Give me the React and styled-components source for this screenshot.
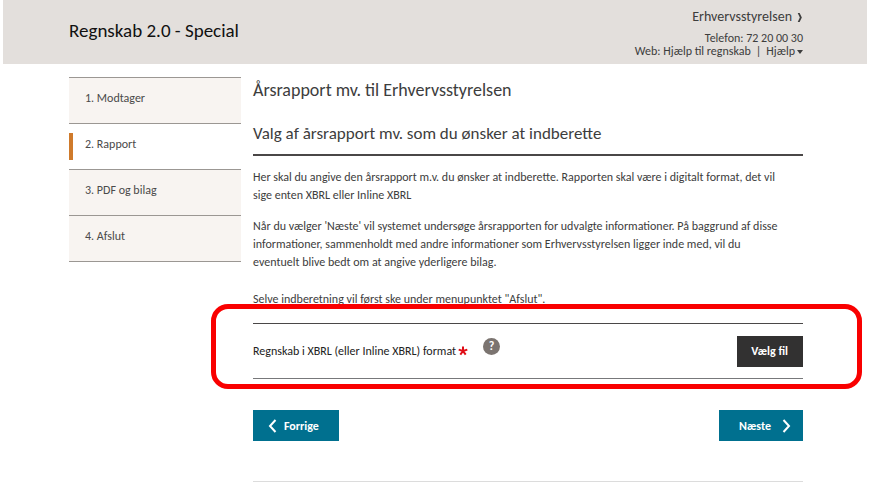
import React, { useState } from 'react';
import styled, { createGlobalStyle } from 'styled-components';

const steps = ['1. Modtager', '2. Rapport', '3. PDF og bilag', '4. Afslut'];

const App = () => {
  const [active, setActive] = useState(1);

  return (
    <>
      <GlobalStyle />
      <Header>
        <AppName>Regnskab 2.0 - Special</AppName>
        <Contact>
          <Agency href="#styrelsen">
            Erhvervsstyrelsen
            <AgencyArrow viewBox="0 0 6 12" aria-hidden="true">
              <path d="M0.5 1H2.6L5 6L2.6 11H0.5L2.8 6Z" />
            </AgencyArrow>
          </Agency>
          <div>Telefon: 72 20 00 30</div>
          <ContactLinks>
            <span>Web: <a href="#regnskab">Hjælp til regnskab</a></span>
            <span>|</span>
            <HelpToggle type="button">Hjælp<Caret /></HelpToggle>
          </ContactLinks>
        </Contact>
      </Header>
      <Page>
        <Steps aria-label="Trin">
          {steps.map((step, i) => (
            <Step
              key={step}
              href={`#trin-${i + 1}`}
              $active={i === active}
              onClick={() => setActive(i)}
            >
              {step}
            </Step>
          ))}
        </Steps>
        <Content>
          <Title>Årsrapport mv. til Erhvervsstyrelsen</Title>
          <Subtitle>Valg af årsrapport mv. som du ønsker at indberette</Subtitle>
          <Text>
            Her skal du angive den årsrapport m.v. du ønsker at indberette. Rapporten skal være i digitalt format, det vil<br />
            sige enten XBRL eller Inline XBRL
          </Text>
          <Text>
            Når du vælger 'Næste' vil systemet undersøge årsrapporten for udvalgte informationer. På baggrund af disse<br />
            informationer, sammenholdt med andre informationer som Erhvervsstyrelsen ligger inde med, vil du<br />
            eventuelt blive bedt om at angive yderligere bilag.
          </Text>
          <LastText>Selve indberetning vil først ske under menupunktet "Afslut".</LastText>
          <UploadRow>
            <UploadLabel id="upload-label">Regnskab i XBRL (eller Inline XBRL) format</UploadLabel>
            <Required viewBox="0 0 10 10" aria-hidden="true">
              <path d="M5 5V0.5M5 5L9.3 3.6M5 5L7.7 8.7M5 5L2.3 8.7M5 5L0.7 3.6" />
            </Required>
            <Help type="button" aria-label="Hjælp til regnskab">?</Help>
            <FileButton type="button" aria-describedby="upload-label">Vælg fil</FileButton>
            <Highlight />
          </UploadRow>
          <Actions>
            <NavButton type="button">
              <Chevron viewBox="0 0 9 14" aria-hidden="true"><path d="M7.5 1L2 7L7.5 13" /></Chevron>
              Forrige
            </NavButton>
            <NavButton type="button" $next>
              Næste
              <Chevron viewBox="0 0 9 14" aria-hidden="true"><path d="M1.5 1L7 7L1.5 13" /></Chevron>
            </NavButton>
          </Actions>
        </Content>
      </Page>
    </>
  );
};

export default App;

const GlobalStyle = createGlobalStyle`
  * {
    box-sizing: border-box;
  }

  body {
    margin: 0;
    background: #fff;
    color: #3d3d3d;
    font-family: Carlito, Calibri, Lato, sans-serif;
    font-size: 12px;
    line-height: 18px;
  }

  a {
    color: inherit;
    text-decoration: none;
  }

  button {
    padding: 0;
    border: 0;
    background: none;
    color: inherit;
    font: inherit;
    cursor: pointer;
  }
`;

const Header = styled.header`
  display: flex;
  justify-content: space-between;
  align-items: flex-start;
  margin: 0 2px 0 3px;
  padding: 8px 64px 6px 66px;
  background: #e3dfdc;
`;

const AppName = styled.div`
  padding-top: 11px;
  color: #111;
  font-size: 19px;
  line-height: 24px;
`;

const Contact = styled.div`
  display: flex;
  flex-direction: column;
  align-items: flex-end;
  line-height: 13px;
`;

const Agency = styled.a`
  display: flex;
  align-items: center;
  gap: 5px;
  margin-bottom: 6px;
  font-size: 14px;
  line-height: 18px;
`;

const AgencyArrow = styled.svg`
  width: 6px;
  height: 11px;
  fill: #3d3d3d;
`;

const ContactLinks = styled.div`
  display: flex;
  gap: 5px;
`;

const HelpToggle = styled.button`
  display: flex;
  align-items: center;
  gap: 2px;
`;

const Caret = styled.span`
  border: 3px solid transparent;
  border-top: 4px solid #3d3d3d;
  border-bottom: 0;
`;

const Page = styled.div`
  display: flex;
  align-items: flex-start;
  gap: 12px;
  padding: 13px 66px 0 69px;
`;

const Steps = styled.nav`
  flex: 0 0 172px;
  border-bottom: 1px solid #9b9793;
`;

const Step = styled.a`
  display: flex;
  align-items: center;
  height: 46px;
  padding: 0 16px 6px;
  border-top: 1px solid #9b9793;
  background: ${props => (props.$active ? '#fff' : '#f8f4f1')};
  color: #4a4a4a;

  &::before {
    content: '';
    display: ${props => (props.$active ? 'block' : 'none')};
    width: 4px;
    height: 27px;
    margin: 6px 12px 0 -16px;
    background: #cf7a2b;
  }
`;

const Content = styled.main`
  flex: 1;
  min-width: 0;
  padding-bottom: 40px;
  border-bottom: 1px solid #dcdcdc;
`;

const Title = styled.h1`
  margin: 0;
  font-size: 18px;
  font-weight: 400;
  line-height: 26px;
`;

const Subtitle = styled.h2`
  margin: 18px 0 12px;
  padding-bottom: 7px;
  border-bottom: 2px solid #4a4747;
  font-size: 17px;
  font-weight: 400;
  line-height: 26px;
`;

const Text = styled.p`
  margin: 0 0 13px;
`;

const LastText = styled.p`
  margin: 19px 0 15px;
`;

const UploadRow = styled.div`
  position: relative;
  display: flex;
  align-items: center;
  height: 56px;
  border-top: 1px solid #4a4747;
  border-bottom: 1px solid #77787a;
`;

const UploadLabel = styled.span`
  color: #222;
`;

const Required = styled.svg`
  width: 10px;
  height: 10px;
  margin-left: 2px;
  fill: none;
  stroke: #e00d16;
  stroke-width: 2;
`;

const Help = styled.button`
  width: 17px;
  height: 17px;
  margin: 0 auto 10px 15px;
  border-radius: 50%;
  background: #7b7470;
  color: #fff;
  font-weight: 700;
  line-height: 17px;
`;

const FileButton = styled.button`
  height: 31px;
  padding: 0 15px 0 14px;
  background: #323131;
  color: #fff;
  font-weight: 700;
`;

// red frame laid over the upload row
const Highlight = styled.div`
  position: absolute;
  inset: -20px -59px -11px -42px;
  border: 5px solid #f90000;
  border-radius: 17px;
  pointer-events: none;
`;

const Actions = styled.div`
  display: flex;
  justify-content: space-between;
  padding-top: 31px;
`;

const NavButton = styled.button`
  display: flex;
  align-items: center;
  gap: ${props => (props.$next ? '11px' : '7px')};
  height: 31px;
  padding: ${props => (props.$next ? '0 12px 0 20px' : '0 20px 0 15px')};
  background: #00708f;
  color: #fff;
  font-weight: 700;
`;

const Chevron = styled.svg`
  width: 9px;
  height: 14px;
  fill: none;
  stroke: #fff;
  stroke-width: 2;
`;
